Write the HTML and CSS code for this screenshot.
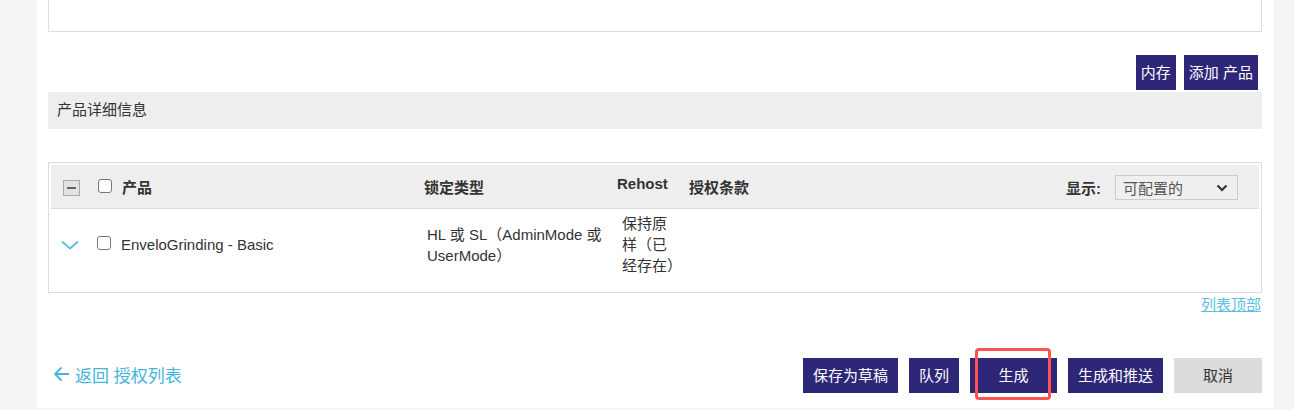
FILE: index.html
```html
<!DOCTYPE html>
<html lang="zh-CN">
<head>
<meta charset="utf-8">
<title>产品详细信息</title>
<link rel="stylesheet" href="styles.css">
</head>
<body>
<div class="panel">
  <div class="topbox"></div>

  <div class="toolbar">
    <button class="btn btn-sm">内存</button>
    <button class="btn btn-sm">添加 产品</button>
  </div>

  <div class="section-title">产品详细信息</div>

  <div class="grid">
    <div class="grid-head">
      <div class="hc hc-product">
        <span class="collapse-all"><span class="minus"></span></span>
        <span class="cb"></span>
        <span class="htext">产品</span>
      </div>
      <div class="hc hc-lock"><span class="htext">锁定类型</span></div>
      <div class="hc hc-rehost"><span class="htext">Rehost</span></div>
      <div class="hc hc-terms"><span class="htext">授权条款</span></div>
      <div class="hc hc-display">
        <span class="htext">显示:</span>
        <div class="select">
          <span>可配置的</span>
          <svg class="select-arrow" width="12" height="8" viewBox="0 0 12 8"><path d="M1.5 1.5 L6 6 L10.5 1.5" fill="none" stroke="#333" stroke-width="2.2"/></svg>
        </div>
      </div>
    </div>
    <div class="grid-row">
      <div class="rc rc-product">
        <svg class="chev" width="18" height="10" viewBox="0 0 18 10"><path d="M1 1.5 L9 8.5 L17 1.5" fill="none" stroke="#5bc0de" stroke-width="2"/></svg>
        <span class="cb"></span>
        <span class="rtext">EnveloGrinding - Basic</span>
      </div>
      <div class="rc rc-lock">HL 或 SL（AdminMode 或 UserMode）</div>
      <div class="rc rc-rehost">保持原<br>样（已<br>经存在）</div>
      <div class="rc rc-terms"></div>
    </div>
  </div>

  <div class="list-top"><a href="#" class="link">列表顶部</a></div>

  <div class="footer">
    <a href="#" class="back">
      <svg width="17" height="16" viewBox="0 0 17 16"><path d="M16 8 H2 M8.5 1.5 L2 8 L8.5 14.5" fill="none" stroke="#45b5de" stroke-width="1.8"/></svg>
      <span>返回 授权列表</span>
    </a>
    <div class="actions">
      <button class="btn">保存为草稿</button>
      <button class="btn">队列</button>
      <button class="btn btn-wide">生成<span class="highlight"></span></button>
      <button class="btn">生成和推送</button>
      <button class="btn btn-wide btn-cancel">取消</button>
    </div>
  </div>
</div>
</body>
</html>
```

FILE: styles.css
```css
* { box-sizing: border-box; }

html, body {
  margin: 0;
  padding: 0;
}

body {
  background: #f5f5f5;
  font-family: "Liberation Sans", "Noto Sans CJK SC", sans-serif;
  font-size: 15px;
  color: #333;
  overflow: hidden;
}

.panel {
  margin-left: 37px;
  width: 1237px;
  height: 408px;
  background: #fff;
  padding: 0 12px 0 11px;
}

.topbox {
  height: 32px;
  border: 1px solid #ddd;
  border-top: 0;
}

.toolbar {
  margin-top: 23px;
  display: flex;
  justify-content: flex-end;
  gap: 8px;
  padding-right: 4px;
}

.btn {
  font-family: "Liberation Sans", "Noto Sans CJK SC", sans-serif;
  font-size: 15px;
  height: 35px;
  border: 0;
  border-radius: 0;
  background: #2e2677;
  color: #fff;
  padding: 0 10px;
  line-height: 35px;
  position: relative;
  cursor: pointer;
}

.btn-sm { padding: 0 5px; }
.btn-wide { min-width: 87px; }

.btn-cancel {
  background: #dcdcdc;
  color: #333;
  min-width: 88px;
}

.highlight {
  position: absolute;
  left: 5px;
  top: -10px;
  width: 76px;
  height: 52px;
  border: 3px solid #ff5252;
  border-radius: 4px;
  pointer-events: none;
}

.section-title {
  margin-top: 2px;
  height: 37px;
  background: #eee;
  padding-left: 9px;
  display: flex;
  align-items: center;
  padding-bottom: 4px;
}

.grid {
  margin-top: 33px;
  border: 1px solid #ddd;
  padding: 2px;
}

.grid-head {
  height: 44px;
  background: #eee;
  border-bottom: 1px solid #ddd;
  display: flex;
  align-items: center;
  font-weight: bold;
}

.hc {
  display: flex;
  align-items: center;
}

.hc-product { width: 373px; padding-left: 12px; }
.hc-lock { width: 193px; }
.hc-rehost { width: 72px; padding-bottom: 6px; }
.hc-terms { flex: 1; }
.hc-display { padding-right: 21px; padding-top: 2px; }

.collapse-all {
  width: 17px;
  height: 16px;
  border: 1px solid #aaa;
  background: #e2e2e2;
  display: flex;
  align-items: center;
  justify-content: center;
  margin-top: 3px;
}

.minus {
  width: 9px;
  height: 2px;
  background: #666;
}

.cb {
  width: 14px;
  height: 14px;
  border: 1px solid #767676;
  border-radius: 3px;
  background: #fff;
  flex: none;
}

.hc-product .cb { margin-left: 18px; margin-top: -2px; }
.hc-product .htext { margin-left: 10px; }

.hc-display .htext { margin-right: 14px; }

.select {
  width: 123px;
  height: 25px;
  border: 1px solid #ccc;
  background: #efefef;
  color: #555;
  display: flex;
  align-items: center;
  justify-content: space-between;
  padding: 0 9px 0 7px;
  font-weight: normal;
}

.grid-row {
  height: 81px;
  display: flex;
  align-items: center;
  padding-bottom: 10px;
  line-height: 21px;
}

.rc-product {
  width: 376px;
  display: flex;
  align-items: center;
  padding-left: 10px;
}

.chev { margin-top: 0; flex: none; }
.rc-product .cb { margin-left: 18px; margin-top: -4px; }
.rc-product .rtext { margin-left: 10px; }

.rc-lock { width: 195px; padding-right: 10px; flex: none; }
.rc-rehost { width: 66px; flex: none; white-space: nowrap; }
.rc-terms { flex: 1; }

.list-top {
  margin-top: 3px;
  text-align: right;
  padding-right: 1px;
  line-height: 18px;
}

.link {
  color: #5bc0de;
  text-decoration: underline;
}

.footer {
  margin-top: 44px;
  display: flex;
  justify-content: space-between;
  align-items: center;
}

.back {
  display: flex;
  align-items: center;
  color: #45b5de;
  text-decoration: none;
  font-size: 17px;
  margin-left: 5px;
  padding-bottom: 3px;
}

.back svg { margin-right: 5px; }

.actions {
  display: flex;
  gap: 11px;
}
```
